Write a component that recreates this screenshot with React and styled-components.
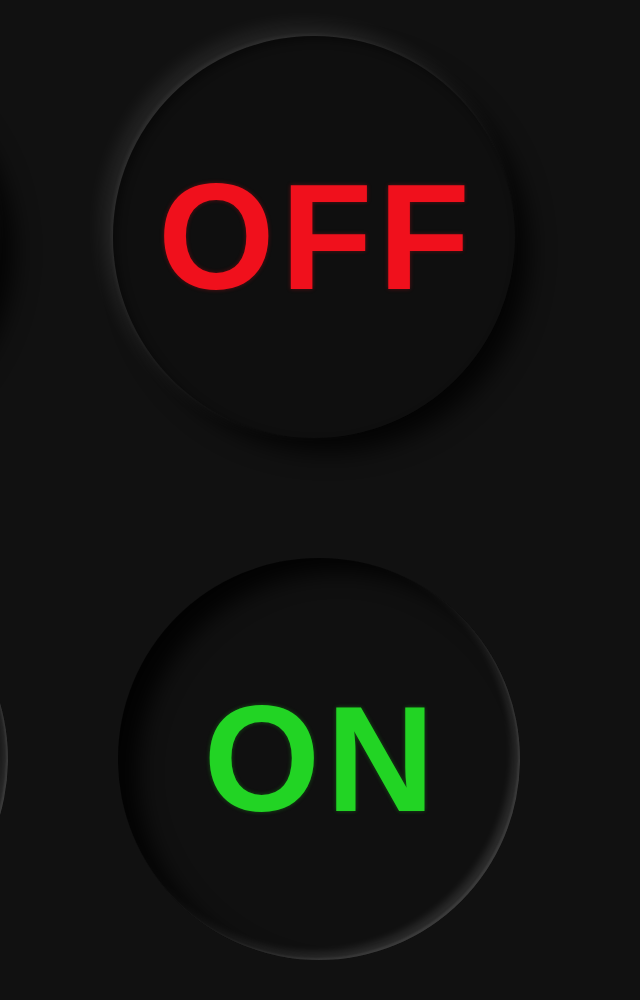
import React from 'react'
import styled, { createGlobalStyle, css } from 'styled-components';

const GlobalStyle = createGlobalStyle`
  html, body {
    margin: 0;
    padding: 0;
    background: #111111;
  }
`;

const Page = styled.div`
  width: 640px;
  height: 1000px;
  overflow: hidden;
  background: #111111;
  display: flex;
  flex-direction: column;
  gap: 120px;
  padding-top: 36px;
  box-sizing: border-box;
`;

const Row = styled.div`
  display: flex;
  gap: ${p => p.$gap}px;
  margin-left: ${p => p.$offset}px;
`;

const raised = css`
  background: #0f0f0f;
  box-shadow:
    -10px -10px 20px rgba(255, 255, 255, 0.09),
    -2px -2px 4px rgba(255, 255, 255, 0.06),
    14px 14px 24px rgba(0, 0, 0, 0.8),
    inset 4px 4px 8px rgba(0, 0, 0, 0.4);
`;

const pressed = css`
  background: #101010;
  box-shadow:
    inset 20px 14px 22px rgba(0, 0, 0, 0.85),
    inset -7px -7px 8px rgba(255, 255, 255, 0.12),
    inset -2px -2px 2px rgba(255, 255, 255, 0.08);
`;

const Knob = styled.div`
  flex: 0 0 auto;
  width: 402px;
  height: 402px;
  border-radius: 50%;
  display: flex;
  align-items: center;
  justify-content: center;
  ${p => (p.$pressed ? pressed : raised)}
`;

const Label = styled.span`
  font-family: "Liberation Sans", Arial, sans-serif;
  font-weight: 700;
  font-size: 150px;
  letter-spacing: 6px;
  line-height: 1;
  color: ${p => p.$color};
  text-shadow: 0 0 4px ${p => p.$glow};
  margin-left: 6px;
`;

const App = () => {
    return (
        <Page>
            <GlobalStyle />
            <Row $offset={-402} $gap={113}>
                <Knob />
                <Knob>
                    <Label $color="#f0101c" $glow="rgba(240,16,28,0.35)">OFF</Label>
                </Knob>
            </Row>
            <Row $offset={-394} $gap={110}>
                <Knob $pressed />
                <Knob $pressed>
                    <Label $color="#22d424" $glow="rgba(34,212,36,0.35)">ON</Label>
                </Knob>
            </Row>
        </Page>
    )
}

export default App
